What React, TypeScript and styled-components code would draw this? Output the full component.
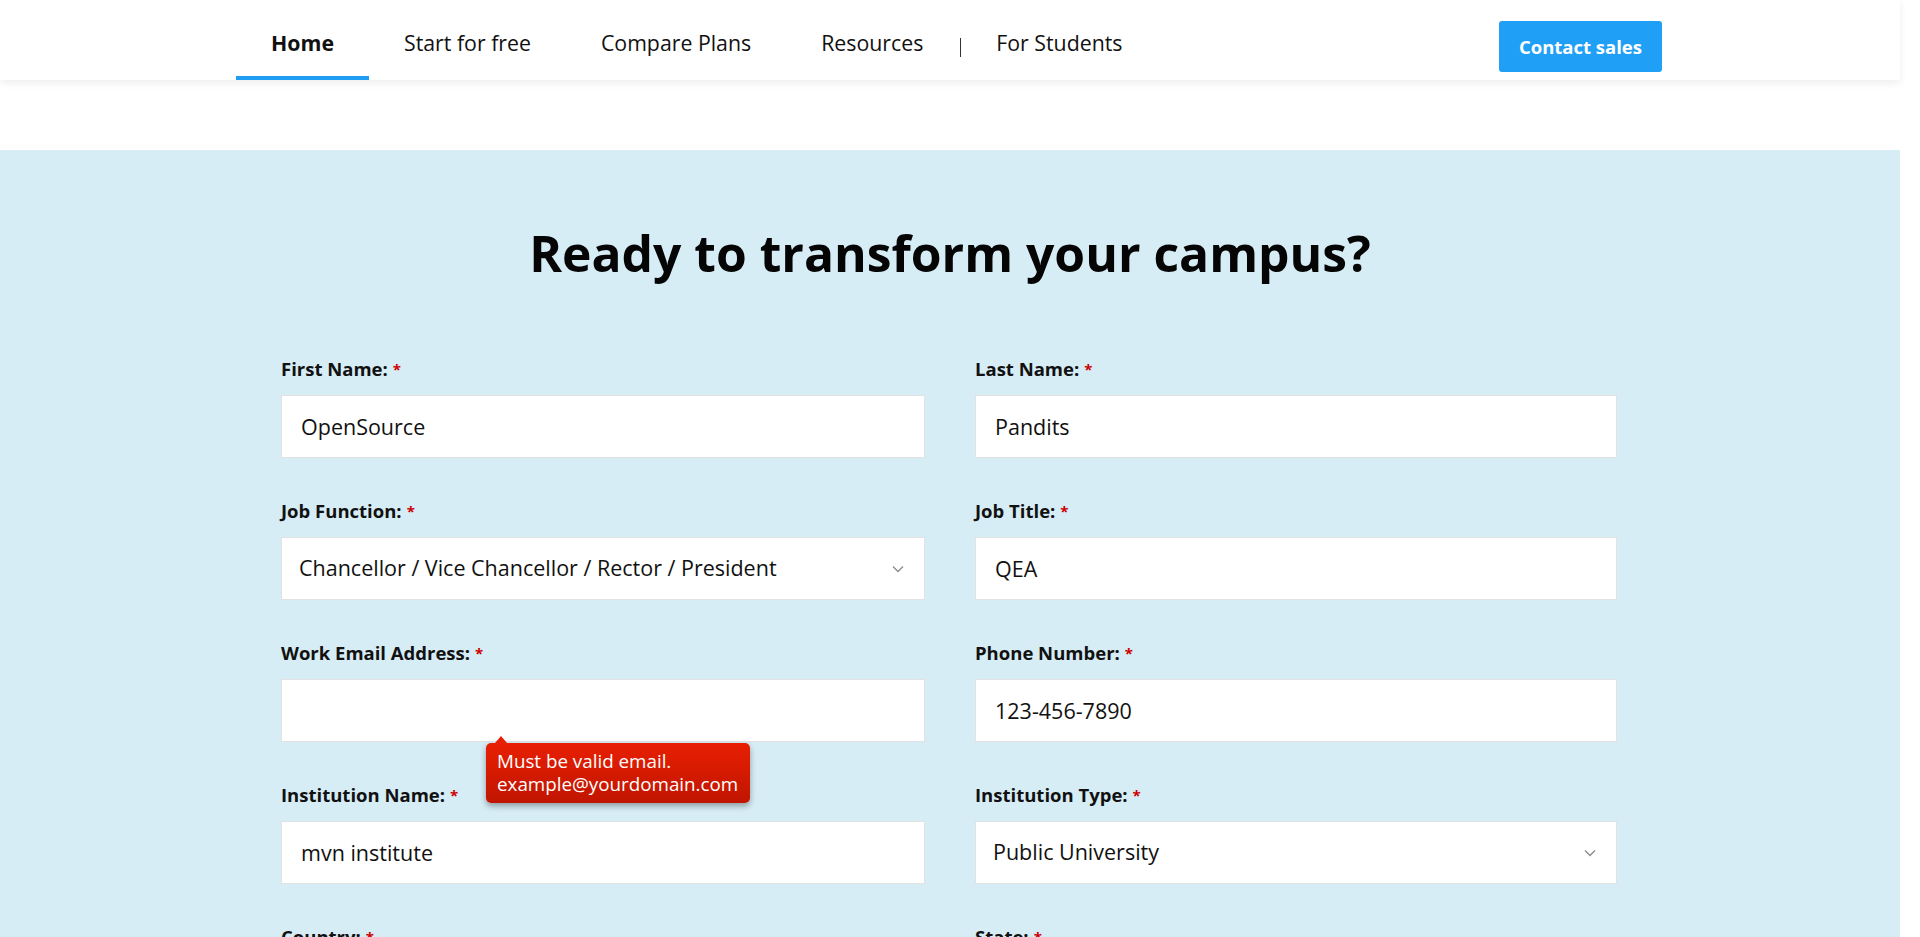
import React from "react";
import styled, { createGlobalStyle } from "styled-components";

const GlobalStyle = createGlobalStyle`
  html, body {
    margin: 0;
    padding: 0;
    overflow: hidden;
    background: #ffffff;
  }
  body {
    font-family: "Open Sans", "Liberation Sans", sans-serif;
    color: #111111;
  }
  * { box-sizing: border-box; }
`;

const Page = styled.div`
  width: 1900px;
  background: #ffffff;
`;

const Header = styled.header`
  height: 80px;
  background: #ffffff;
  box-shadow: 0 3px 8px rgba(0, 0, 0, 0.07);
  position: relative;
  z-index: 2;
`;

const HeaderInner = styled.div`
  width: 1428px;
  height: 100%;
  margin: 0 auto;
  padding-right: 2px;
  display: flex;
  justify-content: space-between;
  align-items: stretch;
`;

const Nav = styled.nav`
  display: flex;
  align-items: stretch;
`;

const NavItem = styled.a<{ $active?: boolean }>`
  display: flex;
  align-items: center;
  padding: 8px 35px 0;
  font-size: 21.3px;
  font-weight: ${(p) => (p.$active ? 700 : 400)};
  color: #111111;
  text-decoration: none;
  border-bottom: 4px solid ${(p) => (p.$active ? "#1e9df2" : "transparent")};
  white-space: nowrap;
  cursor: pointer;
`;

const NavDivider = styled.span`
  align-self: flex-start;
  margin: 38px 0 0 2px;
  width: 1px;
  height: 19px;
  background: #333333;
`;

const ContactButton = styled.button`
  align-self: flex-start;
  margin-top: 21px;
  height: 51px;
  padding: 0 20px;
  border: none;
  border-radius: 3px;
  background: #1f9ff5;
  color: #ffffff;
  font-family: inherit;
  font-size: 18.5px;
  font-weight: 700;
  cursor: pointer;
`;

const Spacer = styled.div`
  height: 70px;
  background: #ffffff;
`;

const Section = styled.section`
  background: #d7edf6;
  padding-top: 73px;
  min-height: 900px;
`;

const Heading = styled.h1`
  margin: 0 0 76px;
  font-size: 49.8px;
  line-height: 60px;
  font-weight: 700;
  text-align: center;
  color: #050505;
`;

const FormGrid = styled.form`
  width: 1338px;
  margin: 0 auto;
  display: grid;
  grid-template-columns: 644px 642px;
  column-gap: 50px;
`;

const Field = styled.div`
  position: relative;
  padding-bottom: 43px;
`;

const Label = styled.label`
  display: block;
  font-size: 18.5px;
  line-height: 20px;
  font-weight: 700;
  color: #111111;
  margin-bottom: 15px;
  white-space: nowrap;
`;

const Required = styled.span`
  color: #cc0000;
  font-size: 15px;
  margin-left: 5px;
  position: relative;
  top: -1px;
`;

const TextInput = styled.input`
  display: block;
  width: 100%;
  height: 63px;
  padding: 0 19px 1px;
  border: 1px solid #e2e2e2;
  border-radius: 0;
  background: #ffffff;
  font-family: inherit;
  font-size: 21.5px;
  color: #111111;
  outline: none;
`;

const SelectWrap = styled.div`
  position: relative;
`;

const Select = styled.select`
  display: block;
  width: 100%;
  height: 63px;
  padding: 0 50px 2px 17px;
  border: 1px solid #e2e2e2;
  border-radius: 0;
  background: #ffffff;
  font-family: inherit;
  font-size: 21.5px;
  color: #111111;
  appearance: none;
  -webkit-appearance: none;
  outline: none;
`;

const Chevron = styled.svg`
  position: absolute;
  right: 21px;
  top: 50%;
  width: 12px;
  height: 8px;
  margin-top: -4px;
  pointer-events: none;
`;

const Tooltip = styled.div`
  position: absolute;
  left: 205px;
  top: 100px;
  z-index: 3;
  padding: 7px 12px 7px 11px;
  border-radius: 5px;
  background: linear-gradient(#e81f02, #c01500);
  box-shadow: 0 3px 6px rgba(0, 0, 0, 0.35);
  color: #ffffff;
  font-size: 18.8px;
  line-height: 23px;
  white-space: nowrap;

  &::before {
    content: "";
    position: absolute;
    top: -7px;
    left: 9px;
    border-left: 6px solid transparent;
    border-right: 6px solid transparent;
    border-bottom: 7px solid #e81f02;
  }
`;

type FieldDef = {
  label: string;
  kind: "text" | "select";
  value: string;
  error?: string[];
};

const fields: FieldDef[] = [
  { label: "First Name:", kind: "text", value: "OpenSource" },
  { label: "Last Name:", kind: "text", value: "Pandits" },
  { label: "Job Function:", kind: "select", value: "Chancellor / Vice Chancellor / Rector / President" },
  { label: "Job Title:", kind: "text", value: "QEA" },
  {
    label: "Work Email Address:",
    kind: "text",
    value: "",
    error: ["Must be valid email.", "example@yourdomain.com"],
  },
  { label: "Phone Number:", kind: "text", value: "123-456-7890" },
  { label: "Institution Name:", kind: "text", value: "mvn institute" },
  { label: "Institution Type:", kind: "select", value: "Public University" },
  { label: "Country:", kind: "select", value: "India" },
  { label: "State:", kind: "select", value: "Select..." },
];

const ChevronIcon = () => (
  <Chevron viewBox="0 0 12 8" fill="none">
    <path d="M1 1.5 L6 6.5 L11 1.5" stroke="#8a8a8a" strokeWidth="1.3" />
  </Chevron>
);

const FormField: React.FC<{ def: FieldDef; id: string }> = ({ def, id }) => (
  <Field>
    <Label htmlFor={id}>
      {def.label}
      <Required>*</Required>
    </Label>
    {def.kind === "text" ? (
      <TextInput id={id} defaultValue={def.value} />
    ) : (
      <SelectWrap>
        <Select id={id} defaultValue={def.value}>
          <option value={def.value}>{def.value}</option>
        </Select>
        <ChevronIcon />
      </SelectWrap>
    )}
    {def.error && (
      <Tooltip>
        {def.error.map((line) => (
          <div key={line}>{line}</div>
        ))}
      </Tooltip>
    )}
  </Field>
);

export default function App() {
  return (
    <Page>
      <GlobalStyle />
      <Header>
        <HeaderInner>
          <Nav>
            <NavItem $active>Home</NavItem>
            <NavItem>Start for free</NavItem>
            <NavItem>Compare Plans</NavItem>
            <NavItem>Resources</NavItem>
            <NavDivider />
            <NavItem>For Students</NavItem>
          </Nav>
          <ContactButton type="button">Contact sales</ContactButton>
        </HeaderInner>
      </Header>
      <Spacer />
      <Section>
        <Heading>Ready to transform your campus?</Heading>
        <FormGrid onSubmit={(e) => e.preventDefault()}>
          {fields.map((f, i) => (
            <FormField key={f.label} def={f} id={`field-${i}`} />
          ))}
        </FormGrid>
      </Section>
    </Page>
  );
}
